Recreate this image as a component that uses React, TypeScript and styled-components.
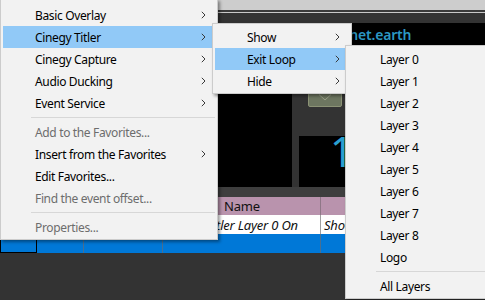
import React from 'react';
import styled, { createGlobalStyle } from 'styled-components';

const GlobalStyle = createGlobalStyle`
  html, body {
    margin: 0;
    padding: 0;
    background: #333333;
  }
  * {
    box-sizing: border-box;
  }
`;

const Screen = styled.div`
  position: relative;
  width: 485px;
  height: 300px;
  overflow: hidden;
  background: #333333;
  display: flex;
  flex-direction: column;
  font-family: 'Noto Sans', 'Open Sans', sans-serif;
`;

const TopBand = styled.div`
  height: 10px;
  background: #cdcdcd;
`;

const TopLines = styled.div`
  height: 13px;
  background: #333333;
  border-top: 2px solid #3a3a3a;
  box-shadow: inset 0 1px 0 #c8c8c8;
`;

const Workspace = styled.div`
  height: 164px;
  display: flex;
  gap: 7px;
`;

const BlackPanel = styled.div`
  width: 292px;
  background: #000;
`;

const RightColumn = styled.div`
  flex: 1;
  display: flex;
  flex-direction: column;
`;

const TitleBar = styled.div`
  height: 22px;
  background: #000;
  display: flex;
  align-items: center;
  padding-left: 30px;
`;

const TitleText = styled.span`
  color: #2c98c4;
  font-size: 14px;
  font-weight: 600;
  letter-spacing: -0.2px;
  white-space: nowrap;
`;

const ControlArea = styled.div`
  height: 91px;
  display: flex;
  align-items: flex-end;
  padding: 0 0 29px 9px;
`;

const DropButton = styled.div`
  width: 34px;
  height: 27px;
  background: #6d7660;
  border: 1px solid #8b9275;
  border-radius: 2px;
  display: flex;
  align-items: flex-end;
  justify-content: center;
  padding-bottom: 5px;
`;

const CounterBox = styled.div`
  flex: 1;
  background: #000;
  padding-left: 31px;
  overflow: hidden;
`;

const CounterDigit = styled.span`
  display: block;
  color: #2a9fd0;
  font-size: 41px;
  line-height: 38px;
  margin-top: -4px;
`;

const Band = styled.div`
  height: 10px;
  background: #3e3e3e;
`;

const TableRow = styled.div<{ $bg: string; $h: number }>`
  display: grid;
  grid-template-columns: 37px 47px 79px 158px 1fr;
  height: ${p => p.$h}px;
  background: ${p => p.$bg};
`;

const Cell = styled.div<{ $center?: boolean; $italic?: boolean; $line?: string; $focus?: boolean }>`
  display: flex;
  align-items: center;
  justify-content: ${p => (p.$center ? 'center' : 'flex-start')};
  padding: 0 2px 0 3px;
  font-size: 13px;
  letter-spacing: -0.2px;
  font-style: ${p => (p.$italic ? 'italic' : 'normal')};
  color: #111;
  white-space: nowrap;
  overflow: hidden;
  border-right: 1px solid ${p => p.$line || 'transparent'};
  outline: ${p => (p.$focus ? '1px solid #000' : 'none')};
  outline-offset: -1px;
`;

const Menu = styled.div<{ $top: number; $left: number; $width: number; $z: number }>`
  position: absolute;
  top: ${p => p.$top}px;
  left: ${p => p.$left}px;
  width: ${p => p.$width}px;
  z-index: ${p => p.$z};
  background: #f2f2f2;
  border: 1px solid #cccccc;
  padding: 2px 5px 1px 2px;
  box-shadow: 2px 2px 3px rgba(0, 0, 0, 0.4);
`;

const MenuItem = styled.div<{ $active?: boolean; $disabled?: boolean }>`
  height: 22px;
  display: flex;
  align-items: center;
  justify-content: space-between;
  padding: 0 6px 0 32px;
  font-size: 12px;
  letter-spacing: -0.35px;
  color: ${p => (p.$disabled ? '#6d6d6d' : '#000')};
  background: ${p => (p.$active ? '#91c9f7' : 'transparent')};
  white-space: nowrap;
`;

const Separator = styled.div`
  height: 1px;
  background: #d7d7d7;
  margin: 3px -3px 3px 28px;
`;

const Chevron = () => (
  <svg width="5" height="8" viewBox="0 0 5 8">
    <path d="M0.8 0.8 L4 4 L0.8 7.2" fill="none" stroke="#3a3a3a" strokeWidth="1" />
  </svg>
);

const DownArrow = () => (
  <svg width="14" height="7" viewBox="0 0 14 7">
    <path d="M1 0.5 L7 6 L13 0.5" fill="none" stroke="#9aa088" strokeWidth="1" />
  </svg>
);

type Entry = { label?: string; sub?: boolean; active?: boolean; disabled?: boolean; sep?: boolean };

const mainEntries: Entry[] = [
  { label: 'Basic Overlay', sub: true },
  { label: 'Cinegy Titler', sub: true, active: true },
  { label: 'Cinegy Capture', sub: true },
  { label: 'Audio Ducking', sub: true },
  { label: 'Event Service', sub: true },
  { sep: true },
  { label: 'Add to the Favorites...', disabled: true },
  { label: 'Insert from the Favorites', sub: true },
  { label: 'Edit Favorites...' },
  { label: 'Find the event offset...', disabled: true },
  { sep: true },
  { label: 'Properties...', disabled: true },
];

const titlerEntries: Entry[] = [
  { label: 'Show', sub: true },
  { label: 'Exit Loop', sub: true, active: true },
  { label: 'Hide', sub: true },
];

const layerEntries: Entry[] = [
  ...Array.from({ length: 9 }, (_, i) => ({ label: `Layer ${i}` })),
  { label: 'Logo' },
  { sep: true },
  { label: 'All Layers' },
];

const MenuList = ({ entries }: { entries: Entry[] }) => (
  <>
    {entries.map((e, i) =>
      e.sep ? (
        <Separator key={i} />
      ) : (
        <MenuItem key={i} $active={e.active} $disabled={e.disabled}>
          <span>{e.label}</span>
          {e.sub && <Chevron />}
        </MenuItem>
      )
    )}
  </>
);

const App = () => {
  return (
    <>
      <GlobalStyle />
      <Screen>
        <TopBand />
        <TopLines />
        <Workspace>
          <BlackPanel />
          <RightColumn>
            <TitleBar>
              <TitleText>planet.earth</TitleText>
            </TitleBar>
            <ControlArea>
              <DropButton>
                <DownArrow />
              </DropButton>
            </ControlArea>
            <CounterBox>
              <CounterDigit>1</CounterDigit>
            </CounterBox>
          </RightColumn>
        </Workspace>
        <Band />
        <TableRow $bg="#b993ad" $h={18}>
          <Cell $line="#a07c95" />
          <Cell $line="#a07c95" />
          <Cell $line="#a07c95" />
          <Cell $center $line="#8f7787">Name</Cell>
          <Cell />
        </TableRow>
        <TableRow $bg="#ffffff" $h={19}>
          <Cell $line="#a0a0a0" />
          <Cell $line="#a0a0a0" />
          <Cell $line="#a0a0a0" />
          <Cell $italic $line="#a0a0a0">Cinegy Titler Layer 0 On</Cell>
          <Cell $italic>Show</Cell>
        </TableRow>
        <TableRow $bg="#0078d7" $h={19}>
          <Cell $focus $line="#000" />
          <Cell $line="#4a6f90" />
          <Cell $line="#4a6f90" />
          <Cell $line="#4a6f90" />
          <Cell />
        </TableRow>

        <Menu $top={-1} $left={0} $width={218} $z={1} style={{ paddingTop: 4 }}>
          <MenuList entries={mainEntries} />
        </Menu>
        <Menu $top={23} $left={212} $width={140} $z={2}>
          <MenuList entries={titlerEntries} />
        </Menu>
        <Menu $top={45} $left={345} $width={160} $z={3}>
          <MenuList entries={layerEntries} />
        </Menu>
      </Screen>
    </>
  );
};

export default App;
